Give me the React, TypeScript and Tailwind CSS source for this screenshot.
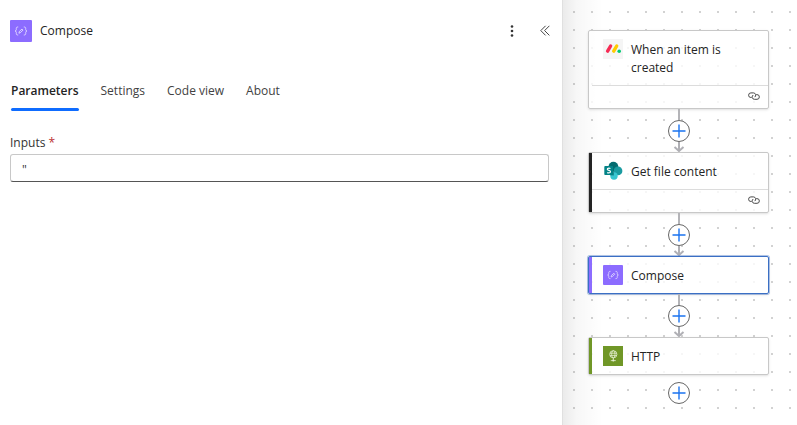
import { useState } from "react";

/* ICONS */
const ComposeIcon = () => (
  <svg viewBox="0 0 22 22" className="size-full" fill="none" aria-hidden="true">
    <rect width="22" height="22" rx="1" fill="#8c6cff" />
    <g stroke="#e4dcff" strokeWidth=".9" strokeLinecap="round">
      <path d="M7.8 7c-1.2 0-1.5.5-1.5 1.4v1.2c0 .8-.4 1.2-1.2 1.4.8.2 1.2.6 1.2 1.4v1.2c0 .9.3 1.4 1.5 1.4" />
      <path d="M14.2 7c1.2 0 1.5.5 1.5 1.4v1.2c0 .8.4 1.2 1.2 1.4-.8.2-1.2.6-1.2 1.4v1.2c0 .9-.3 1.4-1.5 1.4" />
      <path d="m9 12.8.4-1.4 2.6-2.3 1 1-2.5 2.4z" />
    </g>
  </svg>
);

const MondayIcon = () => (
  <svg viewBox="0 0 20 20" className="size-full" aria-hidden="true">
    <rect width="20" height="20" fill="#f5f5f5" />
    <g strokeWidth="3.4" strokeLinecap="round">
      <path d="M4.6 12.1 7.6 7" stroke="#f62b54" />
      <path d="m10.7 12.1 3-5.1" stroke="#ffcb00" />
    </g>
    <circle cx="16.2" cy="12.2" r="1.8" fill="#00ca72" />
  </svg>
);

const SharePointIcon = () => (
  <svg viewBox="0 0 20 20" className="size-full" aria-hidden="true">
    <circle cx="10.4" cy="5.6" r="4.9" fill="#036c70" />
    <circle cx="15" cy="9.9" r="4.4" fill="#1a9ba1" />
    <circle cx="11" cy="15" r="3.7" fill="#37c6d0" />
    <path d="M6 5h5v9.5H7.3L6 13z" fill="#035c5f" opacity=".5" />
    <rect x="1.3" y="5.1" width="9" height="9" rx=".8" fill="#038387" />
    <path
      d="M7.5 7.6C7 7.3 6.5 7.2 5.9 7.2c-1 0-1.6.4-1.6 1.1 0 1.5 3.2.8 3.2 2.4 0 .8-.7 1.2-1.8 1.2-.6 0-1.1-.1-1.5-.4"
      fill="none"
      stroke="#fff"
      strokeWidth="1.2"
    />
  </svg>
);

const HttpIcon = () => (
  <svg viewBox="0 0 20 20" className="size-full" fill="none" aria-hidden="true">
    <rect width="20" height="20" fill="#709727" />
    <g stroke="#e6efd3" strokeWidth=".8">
      <circle cx="10.3" cy="8.3" r="3.6" />
      <ellipse cx="10.3" cy="8.3" rx="1.7" ry="3.6" />
      <path d="M6.9 7.2h6.8M6.9 9.4h6.8M10.3 12v2.4M7.8 14.6h5" />
    </g>
    <circle cx="10.3" cy="14.4" r="1" fill="#e6efd3" />
  </svg>
);

const LinkIcon = () => (
  <svg
    viewBox="0 0 12 8"
    className="h-2 w-3"
    fill="none"
    stroke="#4a4a4a"
    strokeWidth="1"
    role="img"
    aria-label="Connection">
    <path d="M3.6 5.5h-.7A2.3 2.3 0 0 1 2.9.9h2.6a2.3 2.3 0 0 1 1.2 4.2" />
    <path d="M8.2 2.6h.8a2.3 2.3 0 0 1 0 4.7H6.4a2.3 2.3 0 0 1-1.1-4.3" />
  </svg>
);

/* PANEL */
const tabs: string[] = ["Parameters", "Settings", "Code view", "About"];

const DetailsPanel = () => {
  const [activeTab, setActiveTab] = useState<string>("Parameters");
  const [inputs, setInputs] = useState<string>('"');

  return (
    <section className="min-w-0 flex-1 border-r border-[#e0e0e0] bg-white pt-5 pr-[13px] pl-[10px]">
      <header className="-mr-[6px] flex h-[22px] items-center">
        <span className="size-[22px]">
          <ComposeIcon />
        </span>
        <h1 className="ml-2 flex-1 text-xs leading-5 text-[#242424]">
          Compose
        </h1>
        <button
          aria-label="More actions"
          className="flex size-5 items-center justify-center">
          <svg viewBox="0 0 4 14" className="h-[14px] w-1" fill="#333">
            <circle cx="2" cy="2.5" r="1.3" />
            <circle cx="2" cy="7" r="1.3" />
            <circle cx="2" cy="11.5" r="1.3" />
          </svg>
        </button>
        <button
          aria-label="Collapse panel"
          className="ml-[13px] flex size-5 items-center justify-center">
          <svg
            viewBox="0 0 10 12"
            className="h-3 w-[10px]"
            fill="none"
            stroke="#444"
            strokeWidth="1">
            <path d="M5.6 .8.8 5.6l4.8 4.8M9.4 .8 4.6 5.6l4.8 4.8" />
          </svg>
        </button>
      </header>

      <nav role="tablist" className="mt-[39px] flex gap-[22px] pl-px">
        {tabs.map((tab) => (
          <button
            key={tab}
            role="tab"
            aria-selected={tab === activeTab}
            onClick={() => setActiveTab(tab)}
            className={`cursor-pointer text-xs leading-5 whitespace-nowrap ${
              tab === activeTab
                ? "font-semibold text-[#242424]"
                : "text-[#424242]"
            }`}>
            {tab}
            <span
              className={`mt-[7px] block h-[3px] rounded-full ${
                tab === activeTab ? "bg-[#0f6cff]" : "bg-transparent"
              }`}
            />
          </button>
        ))}
      </nav>

      <label
        htmlFor="inputs"
        className="mt-[22px] block text-xs leading-5 text-[#333]">
        Inputs <span className="text-[#bc2f32]">*</span>
      </label>
      <input
        id="inputs"
        type="text"
        value={inputs}
        onChange={(e) => setInputs(e.target.value)}
        className="mt-px block h-7 w-full rounded-[3px] border border-[#c8c8c8] border-b-[#555] px-[11px] pt-[2px] text-xs text-[#333] outline-none"
      />
    </section>
  );
};

/* WORKFLOW */
type NodeCardProps = {
  title: string;
  icon: React.ReactNode;
  accent: string;
  linked?: boolean;
  selected?: boolean;
};

const NodeCard = ({ title, icon, accent, linked, selected }: NodeCardProps) => (
  <article
    className={`flex w-full rounded-xs border bg-white/80 shadow-sm ${
      selected
        ? "border-[#3b6fc4] ring-1 ring-[#3b6fc4]/40"
        : "border-[#c8c8c8]"
    }`}>
    <div className={`w-[3px] shrink-0 ${accent}`} />
    <div className="min-w-0 flex-1">
      <div className="flex gap-2 py-2 pl-[11px]">
        <span className="size-5 shrink-0">{icon}</span>
        <h2 className="w-[104px] pt-[2px] text-xs leading-[18px] text-[#242424]">
          {title}
        </h2>
      </div>
      {linked && (
        <div className="flex h-[23px] items-center justify-end border-t border-[#dcdcdc] pr-2 pb-[2px]">
          <LinkIcon />
        </div>
      )}
    </div>
  </article>
);

const AddButton = () => (
  <button
    aria-label="Add an action"
    className="flex size-[22px] shrink-0 items-center justify-center rounded-full border border-[#666] bg-white">
    <svg viewBox="0 0 14 14" className="size-[14px]" stroke="#1a73f0">
      <path d="M7 .5v13M.5 7h13" strokeWidth="1.4" />
    </svg>
  </button>
);

const Connector = () => (
  <div className="flex h-[43px] flex-col items-center">
    <div className="h-[11px] w-[2px] bg-[#b4b4b8]" />
    <AddButton />
    <svg
      viewBox="0 0 12 10"
      className="h-[10px] w-3"
      fill="none"
      stroke="#b0b0b5"
      strokeWidth="2"
      aria-hidden="true">
      <path d="M6 0v9M1.5 5 6 9l4.5-4" />
    </svg>
  </div>
);

const WorkflowCanvas = () => (
  <main className="w-[234px] shrink-0 bg-[linear-gradient(to_right,#00000014,#00000008_14px,transparent_40px),radial-gradient(circle,#d2d2d2_1px,transparent_1px)] bg-[size:100%_100%,18px_18px] bg-[position:0_0,2px_3px] pt-[30px] pr-[28px] pl-[25px]">
    <div className="flex flex-col items-center">
      <NodeCard
        title="When an item is created"
        icon={<MondayIcon />}
        accent="bg-transparent"
        linked
      />
      <Connector />
      <NodeCard
        title="Get file content"
        icon={<SharePointIcon />}
        accent="bg-[#242424]"
        linked
      />
      <Connector />
      <NodeCard
        title="Compose"
        icon={<ComposeIcon />}
        accent="bg-[#8c6cff]"
        selected
      />
      <Connector />
      <NodeCard title="HTTP" icon={<HttpIcon />} accent="bg-[#709727]" />
      <div className="mt-[7px]">
        <AddButton />
      </div>
    </div>
  </main>
);

const App = () => (
  <div className="flex min-h-screen bg-white font-['Open_Sans','Noto_Sans',sans-serif]">
    <DetailsPanel />
    <WorkflowCanvas />
  </div>
);

export default App;
